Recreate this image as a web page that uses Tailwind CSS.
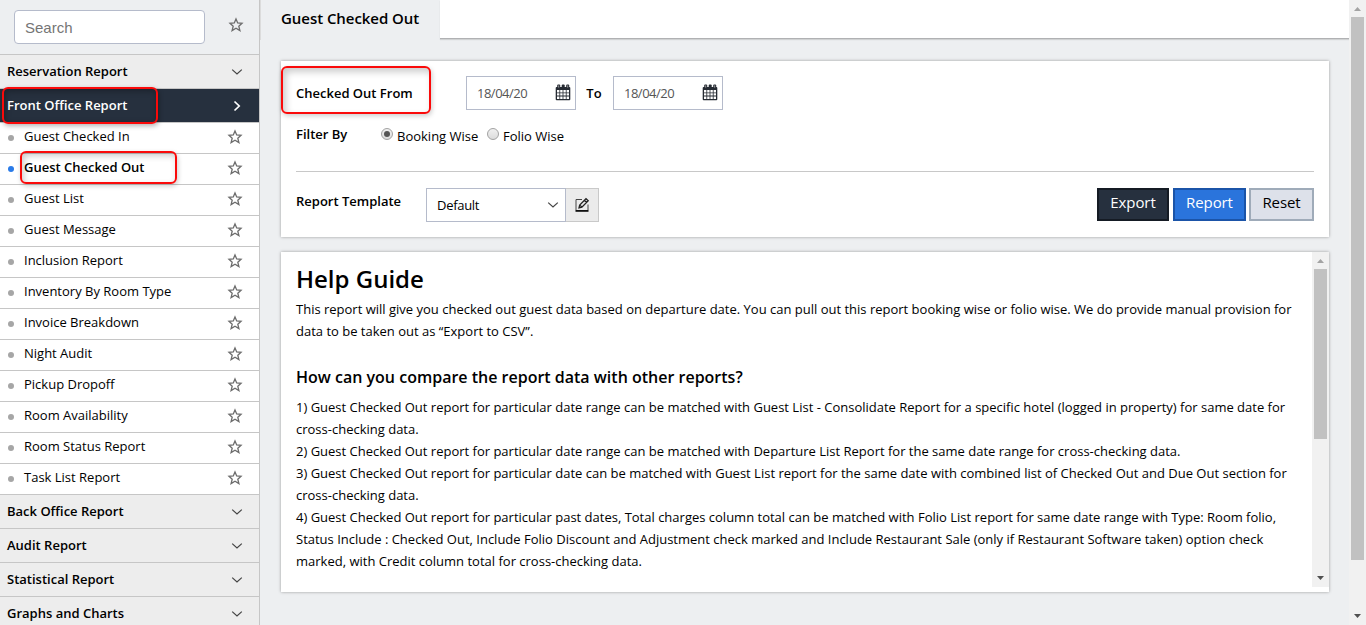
<!DOCTYPE html>
<html lang="en">
<head>
<meta charset="utf-8">
<title>Guest Checked Out</title>
<script src="https://cdn.jsdelivr.net/npm/@tailwindcss/browser@4"></script>
</head>
<body class="relative flex h-[625px] w-[1366px] overflow-hidden bg-[#edeff1] font-['Open_Sans','Noto_Sans',sans-serif] text-[13px] text-black">
<svg class="hidden">
  <symbol id="star" viewBox="0 0 16 16"><path d="M8 1.9 9.7 6 14 6.3 10.8 9.2 11.9 13.6 8 11.3 4.1 13.6 5.2 9.2 2 6.3 6.3 6Z" fill="none" stroke="#6c6c6c" stroke-width="1.3"/></symbol>
  <symbol id="chev" viewBox="0 0 12 8"><path d="M1.2 1.6 6 6 10.8 1.6" fill="none" stroke="#444" stroke-width="1.2"/></symbol>
  <symbol id="cal" viewBox="0 0 16 17"><rect x=".7" y="3" width="14.6" height="13.2" rx="1" fill="#262b33"/><rect x="2.2" y=".6" width="3" height="4" rx="1" fill="#262b33"/><rect x="6.7" y=".6" width="3" height="4" rx="1" fill="#262b33"/><rect x="11.2" y=".6" width="3" height="4" rx="1" fill="#262b33"/><path d="M3.7 1.4v2.2M12.7 1.4v2.2" stroke="#aaa" stroke-width=".9"/><path d="M2 6h2.4v2.4H2zM5.2 6h2.4v2.4H5.2zM8.4 6h2.4v2.4H8.4zM11.6 6H14v2.4h-2.4zM2 9.2h2.4v2.4H2zM5.2 9.2h2.4v2.4H5.2zM8.4 9.2h2.4v2.4H8.4zM11.6 9.2H14v2.4h-2.4zM2 12.4h2.4V15H2zM5.2 12.4h2.4V15H5.2zM8.4 12.4h2.4V15H8.4zM11.6 12.4H14V15h-2.4z" fill="#fff"/></symbol>
</svg>

<aside class="flex h-full w-[260px] shrink-0 flex-col border-r border-[#c6c6c6]">
  <div class="flex h-[55px] shrink-0 items-start border-b border-[#c6c6c6] pt-2.5 pl-3.5">
    <div class="flex h-[34px] w-[191px] items-center rounded border border-[#b5bbcb] bg-white pt-0.5 pl-2.5 font-['Liberation_Sans',sans-serif] text-[15px] text-[#757575]">Search</div>
    <svg class="mt-[7px] ml-[23px] size-4"><use href="#star"/></svg>
  </div>
  <nav id="nav" class="flex flex-col"></nav>
</aside>

<div class="flex h-full w-[1089px] shrink-0 flex-col">
  <header class="flex h-10 shrink-0">
    <div class="h-10 w-[180px] border-l border-[#dcdcdc] pt-2 pl-5 text-[15px] leading-[21px] font-semibold tracking-[-0.05px] whitespace-nowrap">Guest Checked Out</div>
    <div class="h-[39px] flex-1 border-b border-[#b0b1b3] bg-white shadow-[0_1px_1px_rgba(0,0,0,0.12)]"></div>
  </header>

  <main class="flex flex-col pl-[21px]">
    <section class="mt-[21px] h-[176px] w-[1048px] bg-white px-[15px] shadow-[0_0_3px_rgba(0,0,0,0.35)]">
      <div class="flex h-[111px] flex-col border-b border-[#c8c8c8] pt-[15px]">
        <div class="flex h-[34px] items-center">
          <div class="w-[170px] pt-0.5 font-semibold">Checked Out From</div>
          <div class="flex h-[34px] w-[110px] items-center justify-between border border-[#b5bbcb] pr-1 pl-2.5 text-[#555]"><span class="pt-px tracking-[-0.5px]">18/04/20</span><svg class="mb-0.5 h-[17px] w-4"><use href="#cal"/></svg></div>
          <div class="w-[37px] pt-px pr-px text-center font-semibold">To</div>
          <div class="flex h-[34px] w-[110px] items-center justify-between border border-[#b5bbcb] pr-1 pl-2.5 text-[#555]"><span class="pt-px tracking-[-0.5px]">18/04/20</span><svg class="mb-0.5 h-[17px] w-4"><use href="#cal"/></svg></div>
        </div>
        <div class="mt-3.5 flex h-5 items-start leading-[20px]">
          <div class="w-[85px] font-semibold">Filter By</div>
          <div class="mt-1 grid size-3 place-items-center rounded-full border border-[#a2a2a2] bg-gradient-to-b from-[#f0f0f0] to-[#dcdcdc]"><div class="size-1.5 rounded-full bg-[#555]"></div></div>
          <div class="mt-0.5 ml-1 w-[90px]">Booking Wise</div>
          <div class="mt-1 size-3 rounded-full border border-[#a2a2a2] bg-gradient-to-b from-[#f0f0f0] to-[#dcdcdc]"></div>
          <div class="mt-0.5 ml-1">Folio Wise</div>
        </div>
      </div>
      <div class="flex items-start pt-4">
        <div class="mt-1 w-[130px] font-semibold">Report Template</div>
        <div class="flex h-[34px] w-[140px] items-center justify-between border border-[#b5bbcb] pr-1.5 pl-2.5"><span class="pt-0.5 tracking-[-0.3px]">Default</span><svg class="h-2 w-3"><use href="#chev"/></svg></div>
        <div class="grid h-[34px] w-[33px] place-items-center border border-l-0 border-[#c9c9c9] bg-[#ebebeb]">
          <svg class="size-4" viewBox="0 0 16 16" fill="none" stroke="#222"><path d="M8 2.5H2v11h12V7.5" stroke="#444" stroke-width="1"/><path d="M1.5 14h13" stroke="#000" stroke-width="1.5"/><path d="M5 10.8 5.7 8 12 1.7 14.2 3.8 7.9 10.1ZM10.3 3.3 12.5 5.5M5.7 8 7.9 10.1" stroke-width="1.3"/></svg>
        </div>
        <div class="ml-auto flex gap-1 text-[15px] leading-[25px] tracking-[-0.1px]">
          <div class="h-[33px] w-[72px] border-2 border-[#151b24] bg-[#26303e] text-center text-white">Export</div>
          <div class="h-[33px] w-[73px] border-2 border-[#1b54a8] bg-[#2a74dc] text-center text-white">Report</div>
          <div class="-ml-px h-[33px] w-[65px] border-2 border-[#9fabb9] bg-[#dde1ea] text-center">Reset</div>
        </div>
      </div>
    </section>

    <section class="mt-[15px] flex h-[340px] w-[1048px] bg-white shadow-[0_0_3px_rgba(0,0,0,0.35)]">
      <article class="w-[1031px] pt-[9px] pl-[15px] leading-[22px] whitespace-nowrap">
        <h1 class="h-[37px] text-[24px] leading-[36px] font-semibold">Help Guide</h1>
        <p>This report will give you checked out guest data based on departure date. You can pull out this report booking wise or folio wise. We do provide manual provision for<br>data to be taken out as “Export to CSV”.</p>
        <h2 class="mt-6 mb-[7px] text-[16px] leading-[23px] font-semibold">How can you compare the report data with other reports?</h2>
        <p>
          1) Guest Checked Out report for particular date range can be matched with Guest List - Consolidate Report for a specific hotel (logged in property) for same date for<br>
          cross-checking data.<br>
          2) Guest Checked Out report for particular date range can be matched with Departure List Report for the same date range for cross-checking data.<br>
          3) Guest Checked Out report for particular date can be matched with Guest List report for the same date with combined list of Checked Out and Due Out section for<br>
          cross-checking data.<br>
          4) Guest Checked Out report for particular past dates, Total charges column total can be matched with Folio List report for same date range with Type: Room folio,<br>
          Status Include : Checked Out, Include Folio Discount and Adjustment check marked and Include Restaurant Sale (only if Restaurant Software taken) option check<br>
          marked, with Credit column total for cross-checking data.
        </p>
      </article>
      <div class="flex h-[335px] w-[17px] flex-col items-center justify-between bg-[#f1f1f1]">
        <svg class="h-[17px] w-[17px]"><path d="M5 11 8.5 7 12 11Z" fill="#a3a3a3"/></svg>
        <div class="mb-auto h-[170px] w-[13px] bg-[#c1c1c1]"></div>
        <svg class="h-[17px] w-[17px]"><path d="M5 6 8.5 10 12 6Z" fill="#505050"/></svg>
      </div>
    </section>
  </main>
</div>

<div class="flex h-full w-[17px] shrink-0 flex-col items-center bg-[#f1f1f1]">
  <svg class="h-[17px] w-[17px]"><path d="M5 11 8.5 7 12 11Z" fill="#a3a3a3"/></svg>
  <div class="mb-auto h-[543px] w-[13px] bg-[#c1c1c1]"></div>
  <svg class="h-[17px] w-[17px]"><path d="M5 6 8.5 10 12 6Z" fill="#505050"/></svg>
</div>

<div class="absolute top-[87px] left-[2px] h-[37px] w-[156px] rounded-md border-2 border-[#fa0a0a] shadow-[1px_2px_5px_rgba(0,0,0,0.3),inset_1px_2px_6px_rgba(0,0,0,0.3)]"></div>
<div class="absolute top-[151px] left-[20px] h-[33px] w-[157px] rounded-md border-2 border-[#fa0a0a] shadow-[1px_2px_5px_rgba(0,0,0,0.2),inset_2px_3px_6px_rgba(0,0,0,0.2)]"></div>
<div class="absolute top-[66px] left-[281px] h-[48px] w-[150px] rounded-md border-2 border-[#fa0a0a] shadow-[1px_2px_5px_rgba(0,0,0,0.2),inset_3px_4px_7px_rgba(0,0,0,0.2)]"></div>

<script>
const nav = document.getElementById('nav');
const group = t => `<div class="flex h-[34px] shrink-0 items-center justify-between border-b border-[#c6c6c6] bg-[#ededed] pr-4 pl-[7px] font-semibold">${t}<svg class="h-2 w-3"><use href="#chev"/></svg></div>`;
const active = t => `<div class="flex h-[34px] shrink-0 items-center justify-between border-b border-[#c6c6c6] bg-[#26303e] pr-[18px] pl-[7px] font-semibold text-white">${t}<svg class="h-3 w-2"><path d="M1.5 1.5 6.2 6 1.5 10.5" fill="none" stroke="#fff" stroke-width="1.7"/></svg></div>`;
const item = t => `<div class="flex h-[31px] shrink-0 items-center border-b border-[#c6c6c6] bg-white pr-4 pl-2"><i class="size-1.5 rounded-full ${t === 'Guest Checked Out' ? 'bg-[#2a7be8]' : 'bg-[#a6a6a6]'}"></i><span class="ml-2.5 mr-auto -mt-0.5 ${t === 'Guest Checked Out' ? 'font-semibold' : 'font-normal'}">${t}</span><svg class="-mt-0.5 size-4"><use href="#star"/></svg></div>`;
nav.innerHTML = group('Reservation Report') + active('Front Office Report')
  + ['Guest Checked In', 'Guest Checked Out', 'Guest List', 'Guest Message', 'Inclusion Report', 'Inventory By Room Type', 'Invoice Breakdown', 'Night Audit', 'Pickup Dropoff', 'Room Availability', 'Room Status Report', 'Task List Report'].map(item).join('')
  + ['Back Office Report', 'Audit Report', 'Statistical Report', 'Graphs and Charts'].map(group).join('');
</script>
</body>
</html>
